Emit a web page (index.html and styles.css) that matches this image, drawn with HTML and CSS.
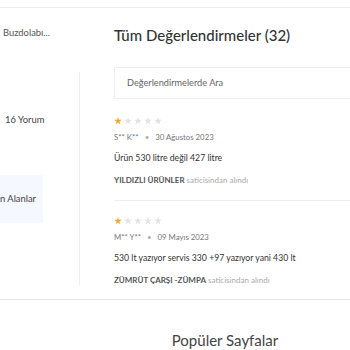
FILE: index.html
```html
<!DOCTYPE html>
<html lang="tr">

<head>
    <meta charset="UTF-8">
    <meta name="viewport" content="width=device-width, initial-scale=1.0">
    <title>Tüm Değerlendirmeler</title>
    <link rel="stylesheet" href="styles.css">
</head>

<body>
    <div class="top-strip"></div>
    <div class="page">
        <aside class="sidebar">
            <div class="crumb">Buzdolabı...</div>
            <div class="filter-panel">
                <div class="filter-item count">16 Yorum</div>
                <div class="filter-item active">n Alanlar</div>
            </div>
        </aside>
        <main class="reviews">
            <h1>Tüm Değerlendirmeler (32)</h1>
            <div class="search-box">Değerlendirmelerde Ara</div>
            <ul class="review-list">
                <li class="review">
                    <div class="stars"><span class="star on"></span><span class="star"></span><span class="star"></span><span class="star"></span><span class="star"></span></div>
                    <div class="meta">S** K** <span class="dot">•</span> 30 Ağustos 2023</div>
                    <p class="comment">Ürün 530 litre değil 427 litre</p>
                    <div class="seller"><b>YILDIZLI ÜRÜNLER</b> saticisindan alındı</div>
                </li>
                <li class="review">
                    <div class="stars"><span class="star on"></span><span class="star"></span><span class="star"></span><span class="star"></span><span class="star"></span></div>
                    <div class="meta">M** Y** <span class="dot">•</span> 09 Mayıs 2023</div>
                    <p class="comment">530 lt yazıyor servis 330 +97 yazıyor yani 430 lt</p>
                    <div class="seller"><b>ZÜMRÜT ÇARŞI -ZÜMPA</b> saticisindan alındı</div>
                </li>
            </ul>
        </main>
    </div>
    <h2 class="popular">Popüler Sayfalar</h2>
</body>

</html>
```

FILE: styles.css
```css
body {
    margin: 0;
    font-family: "Lato", "Noto Sans", sans-serif;
    color: #333;
    background: #fff;
}

.top-strip {
    height: 7px;
    border-bottom: 1px solid #eee;
}

.page {
    display: flex;
    border-bottom: 1px solid #e6e6e6;
    height: 291px;
    overflow: hidden;
}

.sidebar {
    width: 80px;
    flex-shrink: 0;
}

.crumb {
    font-size: 9.4px;
    line-height: 10px;
    color: #555;
    padding: 20px 0 0 3px;
    height: 64px;
    box-sizing: border-box;
    white-space: nowrap;
}

.filter-panel {
    border-right: 1px solid #eee;
    height: 213px;
    padding-top: 43px;
    box-sizing: border-box;
}

.filter-item {
    font-size: 9.4px;
    line-height: 10px;
    color: #444;
    width: 43px;
    white-space: nowrap;
}

.filter-item.count {
    padding-left: 5px;
}

.filter-item.active {
    margin-top: 50px;
    height: 48px;
    line-height: 48px;
    background: #f5f8fe;
}

.reviews {
    flex: 1;
    padding-left: 34px;
    min-width: 0;
}

.reviews h1 {
    margin: 0 0 23px;
    padding-top: 18px;
    font-size: 15px;
    line-height: 18px;
    font-weight: 500;
    color: #333;
    white-space: nowrap;
}

.search-box {
    height: 32px;
    width: 300px;
    margin-bottom: 2px;
    border: 1px solid #eee;
    box-sizing: border-box;
    font-size: 9.2px;
    color: #666;
    line-height: 30px;
    padding-left: 12px;
}

.review-list {
    list-style: none;
    margin: 0;
    padding: 0;
}

.review {
    padding: 15px 0;
    border-bottom: 1px solid #eee;
}

.review:last-child {
    border-bottom: none;
}

.stars {
    display: flex;
    gap: 2px;
    height: 10px;
    align-items: center;
}

.star {
    width: 8px;
    height: 8px;
    background: #e2e2e2;
    clip-path: polygon(50% 0%, 61% 35%, 98% 35%, 68% 57%, 79% 91%, 50% 70%, 21% 91%, 32% 57%, 2% 35%, 39% 35%);
}

.star.on {
    background: #f5a623;
}

.meta {
    margin-top: 6px;
    font-size: 7.8px;
    line-height: 10px;
    color: #777;
}

.meta .dot {
    margin: 0 4px;
    color: #aaa;
}

.comment {
    margin: 11px 0 0;
    font-size: 8.7px;
    line-height: 10px;
    color: #333;
}

.seller {
    margin-top: 12px;
    font-size: 8px;
    line-height: 10px;
    color: #aaa;
}

.seller b {
    color: #555;
}

.popular {
    margin: 31px 0 0;
    text-align: center;
    font-size: 15px;
    line-height: 18px;
    font-weight: 400;
    color: #444;
    padding-left: 100px;
}
```
